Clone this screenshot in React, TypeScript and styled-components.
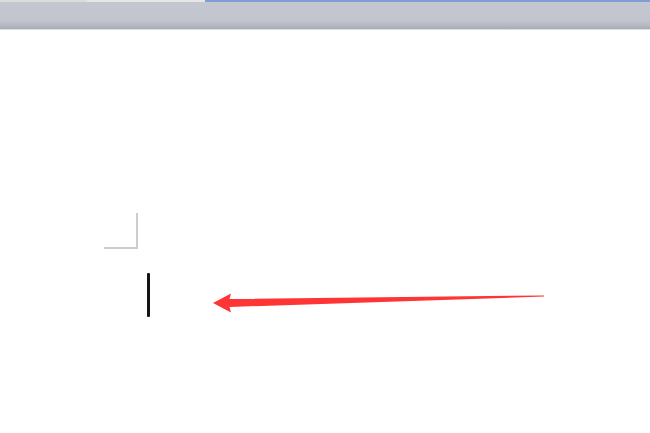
import React from 'react';
import styled, { createGlobalStyle } from 'styled-components';

const GlobalStyle = createGlobalStyle`
  html, body {
    margin: 0;
    padding: 0;
    background: #ffffff;
    font-family: 'Liberation Sans', Arial, sans-serif;
  }
`;

export default function App() {
    return (
        <StlApp>
            <GlobalStyle />
            <StlToolbar>
                <StlTabStrip>
                    <StlTab $color="#dcdcdc" $width={87} />
                    <StlTab $color="#e6e6e3" $width={118} />
                    <StlTab $color="#7e9fd6" />
                </StlTabStrip>
                <StlRibbon />
                <StlRibbonEdge />
            </StlToolbar>
            <StlDocument>
                <StlMarginCorner />
                <StlLine>
                    <StlCursor />
                    <StlArrow width="334" height="22" viewBox="0 0 334 22">
                        <path
                            d="M0 11 L18 1.5 L16.5 7 L331 3.4 L331 4.6 L16.5 15 L18 20.5 Z"
                            fill="#ff3434"
                        />
                    </StlArrow>
                </StlLine>
            </StlDocument>
        </StlApp>
    );
}

const StlApp = styled.div`
    width: 650px;
    height: 433px;
    overflow: hidden;
    background: #ffffff;
`

const StlToolbar = styled.header`
    display: flex;
    flex-direction: column;
`

const StlTabStrip = styled.div`
    display: flex;
    height: 2px;
`

const StlTab = styled.div<{ $color: string; $width?: number }>`
    background: ${(p) => p.$color};
    ${(p) => (p.$width ? `width: ${p.$width}px;` : 'flex: 1;')}
`

const StlRibbon = styled.div`
    height: 27px;
    background: linear-gradient(
        to bottom,
        #c4c7cf 0%,
        #c2c5cd 70%,
        #b4b7bf 88%,
        #a8abb4 100%
    );
`

const StlRibbonEdge = styled.div`
    height: 1px;
    background: #dcdde3;
`

const StlDocument = styled.main`
    display: flex;
    flex-direction: column;
    padding-top: 183px;
`

const StlMarginCorner = styled.div`
    margin-left: 104px;
    width: 32px;
    height: 34px;
    border-right: 2px solid #cdcdcd;
    border-bottom: 2px solid #cdcdcd;
`

const StlLine = styled.div`
    display: flex;
    align-items: flex-start;
    margin-top: 24px;
    padding-left: 147px;
`

const StlCursor = styled.div`
    width: 3px;
    height: 44px;
    background: #141414;
    border-radius: 1px;
`

const StlArrow = styled.svg`
    display: block;
    margin-left: 63px;
    margin-top: 19px;
`
